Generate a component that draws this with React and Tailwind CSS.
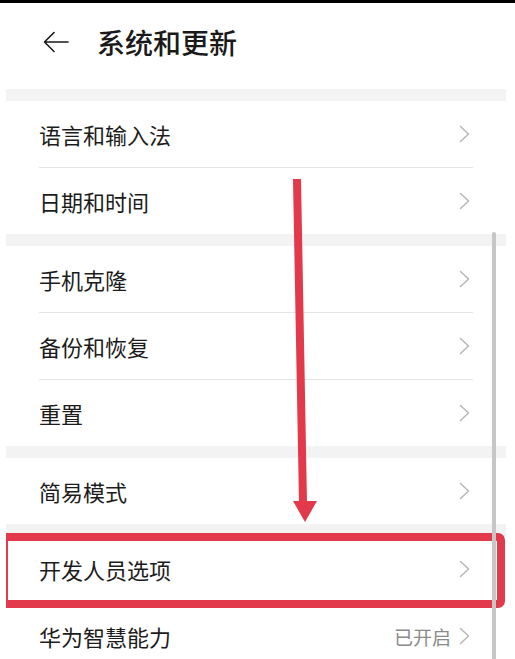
const FONT = { fontFamily: '"Noto Sans CJK SC", "Noto Sans", sans-serif' }

const GROUPS = [
  [{ label: '语言和输入法' }, { label: '日期和时间' }],
  [{ label: '手机克隆' }, { label: '备份和恢复' }, { label: '重置' }],
  [{ label: '简易模式' }],
  [{ label: '开发人员选项', highlight: true }, { label: '华为智慧能力', value: '已开启' }],
]

function Chevron() {
  return (
    <svg width="11" height="18" viewBox="0 0 11 18" fill="none" stroke="#b7b7b7" strokeWidth="1.5" strokeLinecap="round" strokeLinejoin="round">
      <path d="M1.5 1.5L9.5 9L1.5 16.5" />
    </svg>
  )
}

function Row({ item, last }) {
  return (
    <div className="relative">
      <div className="flex h-[66px] items-center justify-between pl-[33px] pr-[36px]">
        <span className="text-[22px] leading-none text-[#1c1c1c]">{item.label}</span>
        <span className="flex items-center gap-[8px]">
          {item.value && <span className="text-[19px] leading-none text-[#8a8a8a]">{item.value}</span>}
          <Chevron />
        </span>
      </div>
      {!last && <div className="mx-[33px] h-px bg-[#e3e3e3]" />}
      {item.highlight && (
        <div className="absolute -left-[6px] right-[1px] -top-[3px] h-[75px] rounded-r-[7px] border-[8px] border-[#e23a4b]" />
      )}
    </div>
  )
}

export default function App() {
  return (
    <div className="relative h-[659px] w-[515px] overflow-hidden bg-white" style={FONT}>
      <div className="h-[3px] bg-black" />
      <div className="relative ml-[6px] mr-[9px] overflow-hidden">
        <header className="flex h-[86px] items-center gap-[28px] pb-[8px] pl-[37px]">
          <svg width="26" height="22" viewBox="0 0 26 22" fill="none" stroke="#1a1a1a" strokeWidth="1.6" strokeLinecap="round" strokeLinejoin="round">
            <path d="M25 11H1.5M11 1.5L1.5 11L11 20.5" />
          </svg>
          <h1 className="text-[28px] font-medium leading-none text-[#1a1a1a]">系统和更新</h1>
        </header>
        {GROUPS.map((group, gi) => (
          <section key={gi}>
            <div className="h-[12px] bg-[#f3f3f3]" />
            {group.map((item, i) => (
              <Row key={item.label} item={item} last={i === group.length - 1} />
            ))}
          </section>
        ))}
      </div>

      {/* scrollbar */}
      <div className="absolute left-[492px] top-[232px] h-[440px] w-[4px] rounded-full bg-[#c6c6c6]" />

      {/* annotation arrow */}
      <svg className="absolute left-0 top-0" width="515" height="659" viewBox="0 0 515 659">
        <polygon points="293,179 301,179 307,503 299,503" fill="#e23a4b" />
        <polygon points="293,501 317,501 305,522" fill="#e23a4b" />
      </svg>
    </div>
  )
}
